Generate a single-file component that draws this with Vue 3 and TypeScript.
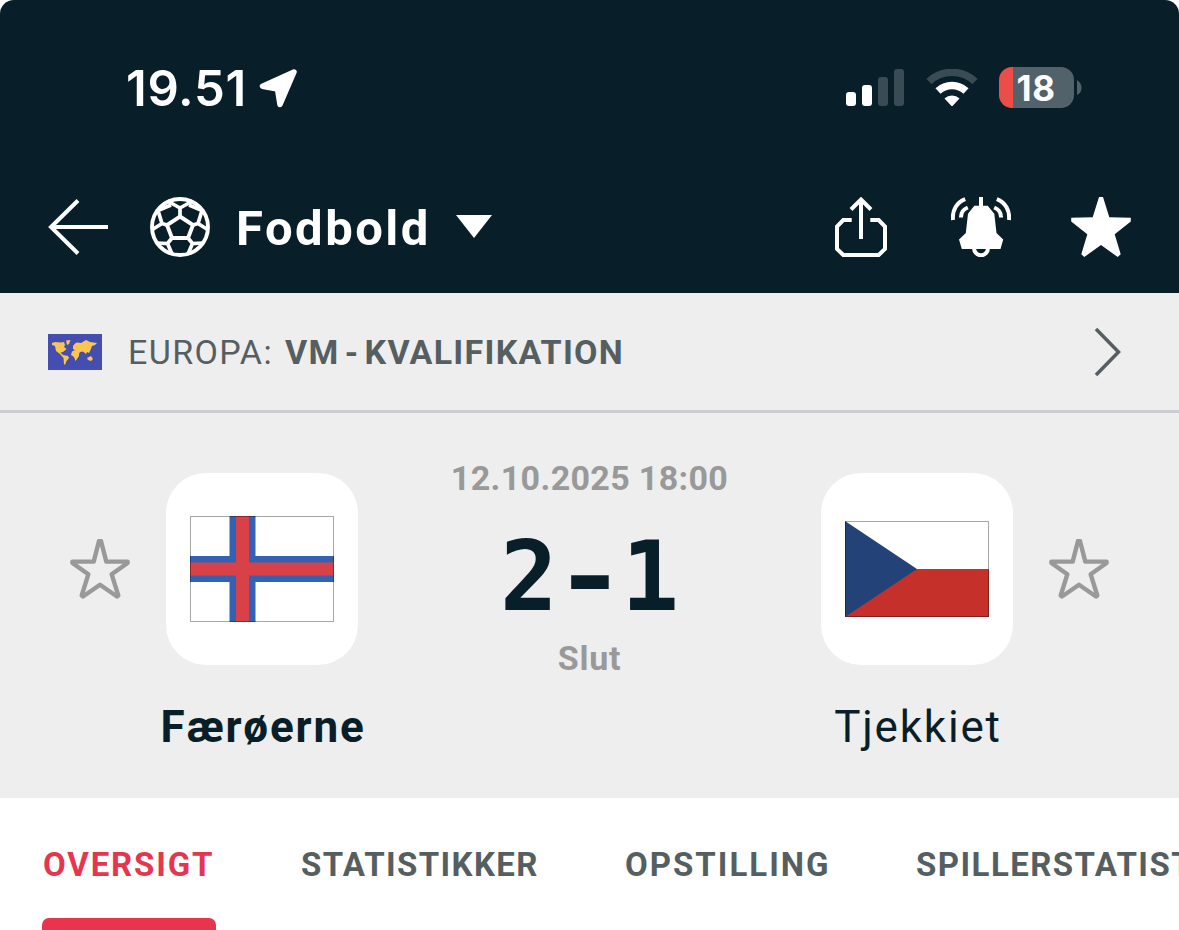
<script setup lang="ts">
interface Tab { label: string; key: string; active?: boolean }

const tabs: Tab[] = [
  { label: 'OVERSIGT', key: 'overview', active: true },
  { label: 'STATISTIKKER', key: 'stats' },
  { label: 'OPSTILLING', key: 'lineup' },
  { label: 'SPILLERSTATISTIK', key: 'players' },
]
const starPath =
  'M29 2H31L36.300 22.600H57.600V24L41.700 35.300L48.300 56.500L47 57.500L30 45.800L13 57.500L11.700 56.500L18.300 35.300L2.400 24V22.600H23.700Z'
</script>

<template>
  <div class="screen">
    <header class="header">
      <div class="status">
        <span class="clock">19.51</span>
        <svg class="location" width="42" height="42" viewBox="0 0 42 42">
          <path d="M37 4L5.500 18.200L20.500 21L23 36.500Z" fill="#fff" stroke="#fff" stroke-width="5.500" stroke-linejoin="round" />
        </svg>
        <svg class="signal" width="58" height="38" viewBox="0 0 58 38">
          <rect x="0" y="23" width="10" height="14" rx="3" fill="#fff" />
          <rect x="16" y="16" width="10" height="21" rx="3" fill="#fff" />
          <rect x="32" y="8" width="10" height="29" rx="3" fill="#394b54" />
          <rect x="48" y="0" width="10" height="37" rx="3" fill="#394b54" />
        </svg>
        <svg class="wifi" width="52" height="38" viewBox="0 0 52 38" fill="none">
          <path d="M3 12.500A33.500 33.500 0 0 1 49 12.500" stroke="#394b54" stroke-width="7.500" />
          <path d="M12 22A20.500 20.500 0 0 1 40 22" stroke="#fff" stroke-width="7.500" />
          <path d="M18.500 29.500A11 11 0 0 1 33.500 29.500L27 36.500Q26 37.500 25 36.500Z" fill="#fff" />
        </svg>
        <div class="battery"><span>18</span></div>
        <svg class="nub" width="5" height="16" viewBox="0 0 5 16"><path d="M0 0Q4.500 3 4.500 8T0 15Z" fill="#52626a" /></svg>
      </div>
      <nav class="nav">
        <svg class="back" width="62" height="60" viewBox="0 0 62 60" fill="none" stroke="#fff" stroke-width="4">
          <path d="M30 3.500L3 30L30 56.500M3 30H60" />
        </svg>
        <svg class="ball" width="60" height="60" viewBox="0 0 60 60" fill="none" stroke="#fff" stroke-width="3.900">
          <circle cx="30" cy="30" r="28" />
          <path d="M30 19.500L43 28L38 41H22L17 28Z" />
          <path d="M30 19.500V11L17.500 4M30 11L42.500 4M17 28L12 26.500L8 13.500L21 8M12 26.500L2.500 32.500M43 28L48 26.500L52 13.500L39 8M48 26.500L57.500 32.500M22 41L17.500 46.500L7 46M17.500 46.500L22 57M38 41L42.500 46.500L53 46M42.500 46.500L38 57" stroke-width="3.700" />
        </svg>
        <span class="sport">Fodbold</span>
        <svg class="caret" width="36" height="24" viewBox="0 0 36 24"><path d="M0 0H36L18 23Z" fill="#fff" /></svg>
        <svg class="share" width="52" height="60" viewBox="0 0 52 60" fill="none" stroke="#fff" stroke-width="4">
          <path d="M16.700 23H8.300L2 29.500V52L8.300 58H43.700L50 52V29.500L43.700 23H35.300M26 42V3M16 12.500L26 2.500L36 12.500" />
        </svg>
        <svg class="bell" width="60" height="60" viewBox="0 0 60 60" fill="none" stroke="#fff" stroke-width="4">
          <path d="M23.300 8.700H28V0H32V8.700H36.700L43.300 16.700L45.500 36L52.200 42.500L49.500 52H10.800L8 42.500L14.800 36L17 16.700Z" fill="#fff" stroke="none" />
          <path d="M23 51A7 7.300 0 0 0 37 51" />
          <path d="M14.200 2.200C5.500 5.500 1 13.500 2 23M16.800 10.500C12 12.500 9.800 16 10 20.500M45.800 2.200C54.500 5.500 59 13.500 58 23M43.200 10.500C48 12.500 50.200 16 50 20.500" />
        </svg>
        <svg class="fav" width="60" height="60" viewBox="0 0 60 60">
          <path d="M28 0H32L38.300 20.300L59.800 20.700V24.500L43.700 37.300L49.700 57.300L46.700 60L30 48L13.300 60L10.300 57.300L16.300 37.300L.2 24.500V20.700L21.700 20.300Z" fill="#fff" />
        </svg>
      </nav>
    </header>

    <section class="league">
      <svg class="world" width="54" height="36" viewBox="0 0 54 36">
        <path d="M0 0H54V36H0Z" fill="#444db0" />
        <path
          d="M4 9L7 8L13 8.500L16 8L17 11L16 13L18.500 15L15 18L12.500 18.500L15 21L20 22L21 24L18.500 27L17 31L16 30L15.500 24L12 20L8 17L7 12L4 11ZM18 6.500L22.500 6L21 10L19 11ZM25 12L27 9.500L29 8.500L33 9L38 6L42 8L49 9L47 11L44 12L43 15L41 19L39 18L38 20L35 17.500L32 18L31 20L31 22L29 25L27.500 27L26 23L23 21L24 17.500L27 16L25 15ZM39 24L43 22L45 25L43 27L40 26Z"
          fill="#fac651"
        />
      </svg>
      <span class="country">EUROPA:</span>
      <span class="competition">VM - KVALIFIKATION</span>
      <svg class="chevron" width="28" height="50" viewBox="0 0 28 50" fill="none" stroke="#555e61" stroke-width="3.500">
        <path d="M2 2L24.500 25L2 48" />
      </svg>
    </section>

    <section class="match">
      <svg class="star" width="60" height="60" viewBox="0 0 60 60"><path :d="starPath" /></svg>
      <div class="team home">
        <div class="badge">
          <svg width="144" height="106" viewBox="0 0 144 106">
            <path d="M0 0H144V106H0Z" fill="#fff" />
            <path d="M39.500 0H65.500V106H39.500ZM0 40H144V66H0Z" fill="#3362b5" />
            <path d="M46 0H59V106H46ZM0 46.500H144V59.500H0Z" fill="#d84147" />
            <path d="M.5 .5H143.500V105.500H.5Z" fill="none" stroke="#000" stroke-opacity=".35" />
          </svg>
        </div>
        <span class="name">Færøerne</span>
      </div>
      <div class="result">
        <span class="date">12.10.2025 18:00</span>
        <span class="score"><span>2</span><span class="dash">-</span><span class="one">1</span></span>
        <span class="state">Slut</span>
      </div>
      <div class="team away">
        <div class="badge">
          <svg width="144" height="96" viewBox="0 0 144 96">
            <path d="M0 0H144V48H0Z" fill="#fff" />
            <path d="M0 48H144V96H0Z" fill="#c5302a" />
            <path d="M0 0L72 48L0 96Z" fill="#234378" />
            <path d="M.5 .5H143.500V95.500H.5Z" fill="none" stroke="#000" stroke-opacity=".35" />
          </svg>
        </div>
        <span class="name">Tjekkiet</span>
      </div>
      <svg class="star" width="60" height="60" viewBox="0 0 60 60"><path :d="starPath" /></svg>
    </section>

    <div class="tabs">
      <div v-for="tab in tabs" :key="tab.key" class="tab" :class="[tab.key, { active: tab.active }]">
        <span>{{ tab.label }}</span>
      </div>
    </div>
  </div>
</template>

<style>
body { margin: 0; background: #fff; }
</style>

<style scoped>
.screen { width: 1179px; height: 930px; overflow: hidden; background: #fff; font-family: Roboto, "Liberation Sans", sans-serif; }
.screen span { white-space: nowrap; }
.screen svg { display: block; flex: none; }
.header { height: 293px; background: #081e28; border-radius: 14px 14px 0 0; color: #fff; }
.status { height: 167px; box-sizing: border-box; padding: 8px 97px 0 126px; display: flex; align-items: center; font-family: Inter, sans-serif; }
.clock { width: 131px; font-size: 49px; font-weight: 600; letter-spacing: .7px; padding-top: 2px; }
.location { margin-top: 2px; }
.signal { margin-left: auto; }
.wifi { margin-left: 22px; }
.battery { width: 75px; height: 41px; margin-left: 21px; border-radius: 13px; background: linear-gradient(90deg, #eb4e48 14px, #52626a 14px); display: flex; align-items: center; justify-content: center; font-size: 35px; font-weight: 700; letter-spacing: .6px; box-sizing: border-box; padding-right: 1px; }
.nub { margin-left: 3px; }
.nav { height: 120px; display: flex; align-items: center; padding: 0 48px; }
.ball { margin-left: 40px; }
.sport { width: 196px; margin-left: 26px; font-size: 49px; font-weight: 700; letter-spacing: 2.5px; line-height: 60px; padding-top: 3px; }
.caret { margin: -1px 0 0 24px; }
.share { margin-left: auto; }
.bell { margin-left: 64px; }
.fav { margin-left: 60px; }
.league { height: 120px; box-sizing: border-box; border-bottom: 3px solid #cbccd1; background: #eee; display: flex; align-items: center; padding: 0 57px 0 48px; color: #555e61; font-size: 34px; }
.country { margin-left: 26px; width: 157px; letter-spacing: 1.4px; }
.competition { font-weight: 700; letter-spacing: 1.25px; word-spacing: -4.5px; }
.chevron { margin-left: auto; }
.match { height: 385px; background: #eee; display: flex; justify-content: space-between; padding: 0 70px; color: #081e28; }
.star { margin-top: 126px; }
.star path { fill: none; stroke: #999; stroke-width: 4.4; stroke-linejoin: round; }
.team { width: 212px; padding-top: 60px; display: flex; flex-direction: column; align-items: center; font-size: 44px; }
.home { margin-left: 26px; }
.away { margin-right: 26px; }
.badge { width: 192px; height: 192px; border-radius: 40px; background: #fff; display: flex; align-items: center; justify-content: center; }
.name { margin-top: 36px; line-height: 52px; letter-spacing: 1.8px; padding-left: 2px; }
.home .name { font-weight: 700; letter-spacing: 1.8px; }
.result { flex: 1; display: flex; flex-direction: column; align-items: center; color: #999; font-weight: 700; font-size: 34px; }
.date { margin-top: 44px; line-height: 42px; letter-spacing: .35px; }
.score { display: flex; margin-top: 22px; height: 112px; line-height: 112px; font-family: "DejaVu Sans Mono", monospace; font-size: 96px; letter-spacing: 2.8px; margin-right: -3px; color: #081e28; }
.dash { transform: scaleX(1.27); transform-origin: 48% 50%; }
.state { margin-top: 4px; line-height: 42px; letter-spacing: .7px; }
.tabs { height: 132px; display: flex; overflow: hidden; padding-left: 42px; box-sizing: border-box; }
.tab { flex: none; height: 132px; box-sizing: border-box; padding-top: 46px; font-size: 33px; line-height: 42px; font-weight: 700; letter-spacing: 1.6px; color: #555e61; }
.overview { width: 174px; margin-right: 85px; letter-spacing: 1.85px; }
.overview span { padding-left: 1px; }
.stats { width: 239px; margin-right: 85px; letter-spacing: 1.35px; }
.lineup { width: 206px; margin-right: 85px; letter-spacing: 2px; }
.players { letter-spacing: 1.45px; }
.active { color: #e6354f; }
.active::after { content: ""; display: block; height: 12px; margin-top: 32px; border-radius: 7px 7px 0 0; background: #e8344d; }
</style>
